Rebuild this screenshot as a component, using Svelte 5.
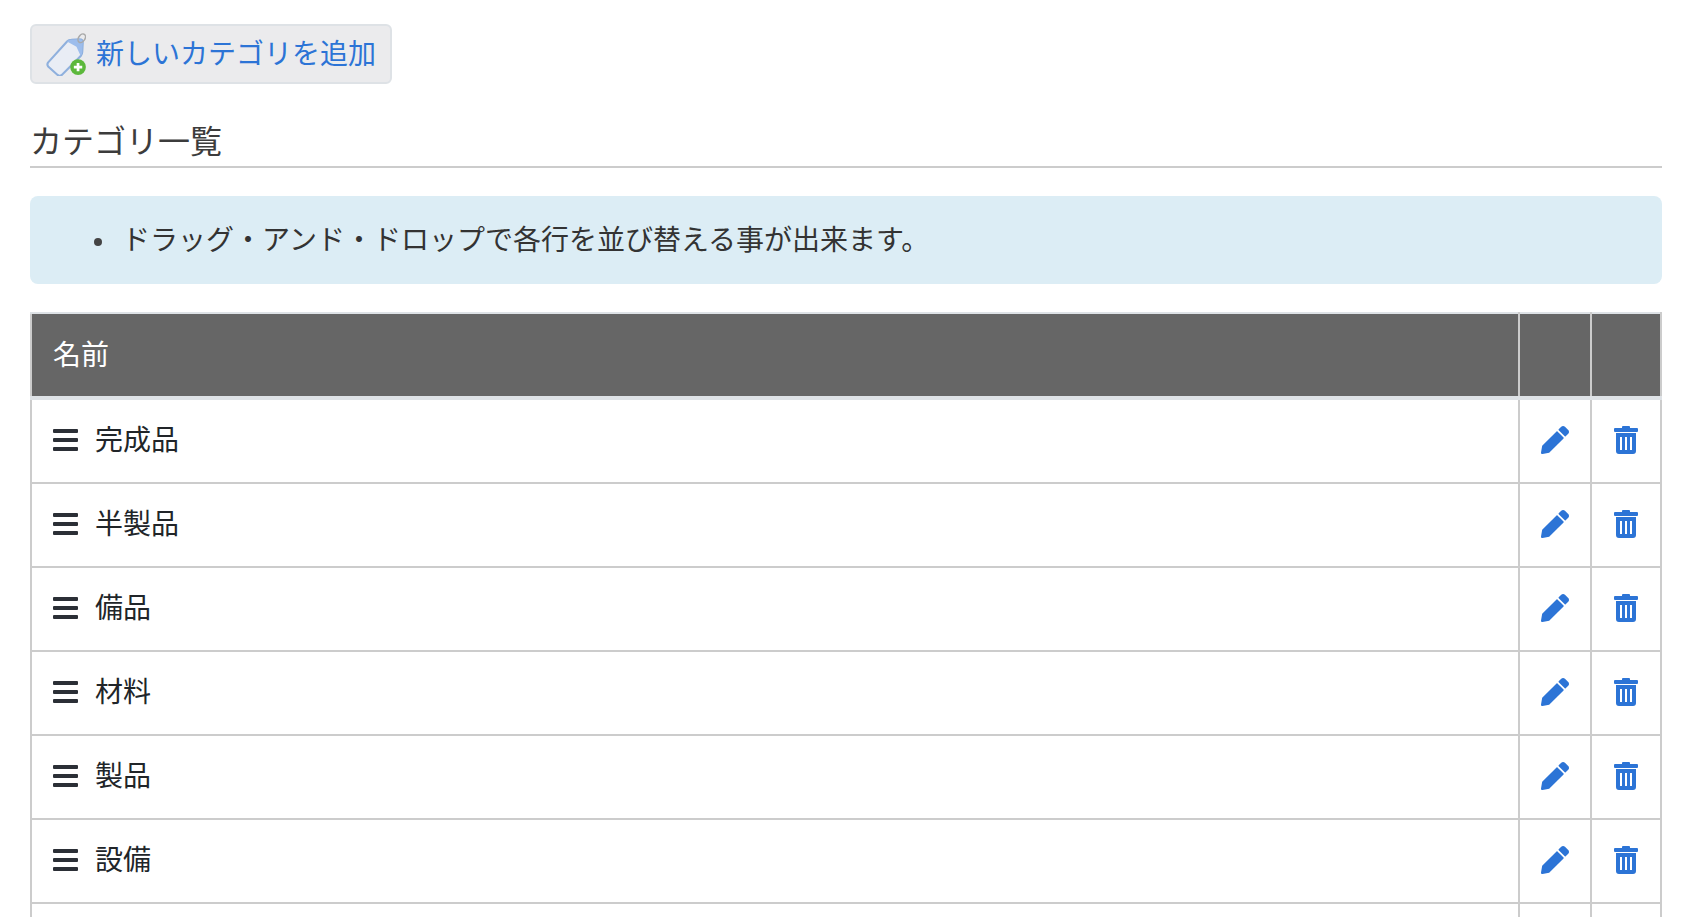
<script>
    let categories = ['完成品', '半製品', '備品', '材料', '製品', '設備'];
</script>

<div class="page">
    <button class="add-button">
        <svg class="tag-icon" viewBox="2 0 38 42" width="40" height="44">
            <path d="M4 29 L22 9 Q23.5 7.5 26 7.5 L34 7 Q37 7 37 10 L36.5 19 Q36.5 21 35 23 L17 41 Q15 42.5 13 41 L4 33 Q2.5 31 4 29 Z" fill="#e9edf5" stroke="#8fb0dd" stroke-width="2"/>
            <path d="M22 9 Q23.5 7.5 26 7.5 L34 7 Q37 7 37 10 L36.5 19 Q36.5 21 35 23 L31 14 Z" fill="#9dbdec"/>
            <ellipse cx="36" cy="6" rx="3" ry="4.5" transform="rotate(35 36 6)" fill="none" stroke="#a9a9a9" stroke-width="1.4"/>
            <circle cx="32.5" cy="33.5" r="7.5" fill="#5cb83c"/>
            <path d="M32.5 29.5v8M28.5 33.5h8" stroke="#fff" stroke-width="2.6"/>
        </svg>
        <span class="lift">新しいカテゴリを追加</span>
    </button>

    <h2>カテゴリ一覧</h2>

    <div class="info">
        <ul>
            <li class="lift">ドラッグ・アンド・ドロップで各行を並び替える事が出来ます。</li>
        </ul>
    </div>

    <table>
        <thead>
            <tr>
                <th><span class="lift">名前</span></th>
                <th class="edit"></th>
                <th class="remove"></th>
            </tr>
        </thead>
        <tbody>
            {#each categories as category, i}
                <tr class:first={i === 0}>
                    <td>
                        <div class="name">
                            <svg class="bars" viewBox="0 0 25 22" width="25" height="22">
                                <rect y="0" width="25" height="4" rx="1"/>
                                <rect y="9" width="25" height="4" rx="1"/>
                                <rect y="18" width="25" height="4" rx="1"/>
                            </svg>
                            <span class="lift">{category}</span>
                        </div>
                    </td>
                    <td class="edit">
                        <svg class="icon" viewBox="0 0 512 512" width="28" height="28">
                            <path d="M497.9 142.1l-46.1 46.1c-4.7 4.7-12.3 4.7-17 0l-111-111c-4.7-4.7-4.7-12.3 0-17l46.1-46.1c18.7-18.7 49.1-18.7 67.9 0l60.1 60.1c18.8 18.7 18.8 49.1 0 67.9zM284.2 99.8L21.6 362.4.4 483.9c-2.9 16.4 11.4 30.6 27.8 27.8l121.5-21.3 262.6-262.6c4.7-4.7 4.7-12.3 0-17l-111-111c-4.8-4.7-12.4-4.7-17.1 0z"/>
                        </svg>
                    </td>
                    <td class="remove">
                        <svg class="icon" viewBox="0 0 24 28" width="24" height="28">
                            <path fill-rule="evenodd" d="M9 0h6a1 1 0 0 1 1 1v1h7a1 1 0 0 1 1 1v2a1 1 0 0 1-1 1H1a1 1 0 0 1-1-1V3a1 1 0 0 1 1-1h7V1a1 1 0 0 1 1-1zM2 7h20v18a3 3 0 0 1-3 3H5a3 3 0 0 1-3-3zM6 11v13h2V11zM11 11v13h2V11zM16 11v13h2V11z"/>
                        </svg>
                    </td>
                </tr>
            {/each}
            <tr class="partial">
                <td></td>
                <td></td>
                <td></td>
            </tr>
        </tbody>
    </table>
</div>

<style>
    :global(body) {
        margin: 0;
        background: #fff;
    }

    .page {
        padding: 24px 32px 0 30px;
        font-family: "Liberation Sans", "Noto Sans CJK JP", sans-serif;
        font-size: 28px;
        color: #333;
    }

    .lift {
        position: relative;
        top: -2px;
    }

    .add-button {
        display: flex;
        align-items: center;
        gap: 10px;
        width: 362px;
        height: 60px;
        padding: 0 0 0 14px;
        background: #ebebed;
        border: 2px solid #dee2e6;
        border-radius: 6px;
        color: #2c74d6;
        font: inherit;
        box-sizing: border-box;
    }

    .tag-icon {
        flex: none;
    }

    h2 {
        margin: 36px 0 0;
        height: 46px;
        font-size: 32px;
        font-weight: 400;
        line-height: 44px;
        color: #3c3c3c;
        border-bottom: 2px solid #ccc;
    }

    .info {
        margin-top: 28px;
        height: 88px;
        background: #dcedf5;
        border-radius: 8px;
        display: flex;
        align-items: center;
    }

    ul {
        margin: 0;
        padding-left: 92px;
        list-style: none;
    }

    li::before {
        content: "";
        position: absolute;
        left: -28px;
        top: 20px;
        width: 8px;
        height: 8px;
        border-radius: 50%;
        background: #444;
    }

    table {
        margin-top: 28px;
        width: 100%;
        border-collapse: collapse;
        table-layout: fixed;
    }

    th {
        height: 85px;
        padding: 0 21px 1px;
        background: #666;
        color: #fff;
        font-weight: 400;
        text-align: left;
        border: 2px solid #ccc;
        border-top-color: #dee2e6;
        border-bottom: 4px solid #dee2e6;
        box-sizing: border-box;
    }

    td {
        height: 84px;
        padding: 0 21px 2px;
        color: #212529;
        border: 2px solid #ccc;
        box-sizing: border-box;
    }

    .first td {
        height: 85px;
    }

    th.edit,
    td.edit {
        width: 72px;
        padding: 0 0 2px;
    }

    th.remove,
    td.remove {
        width: 70px;
        padding: 0 0 2px;
    }

    .partial td {
        height: 14px;
        padding: 0;
        border-bottom: none;
    }

    .name {
        display: flex;
        align-items: center;
        gap: 17px;
    }

    .bars {
        fill: #2b2f36;
    }

    .icon {
        display: block;
        margin: 0 auto;
        fill: #2c74d6;
    }
</style>
